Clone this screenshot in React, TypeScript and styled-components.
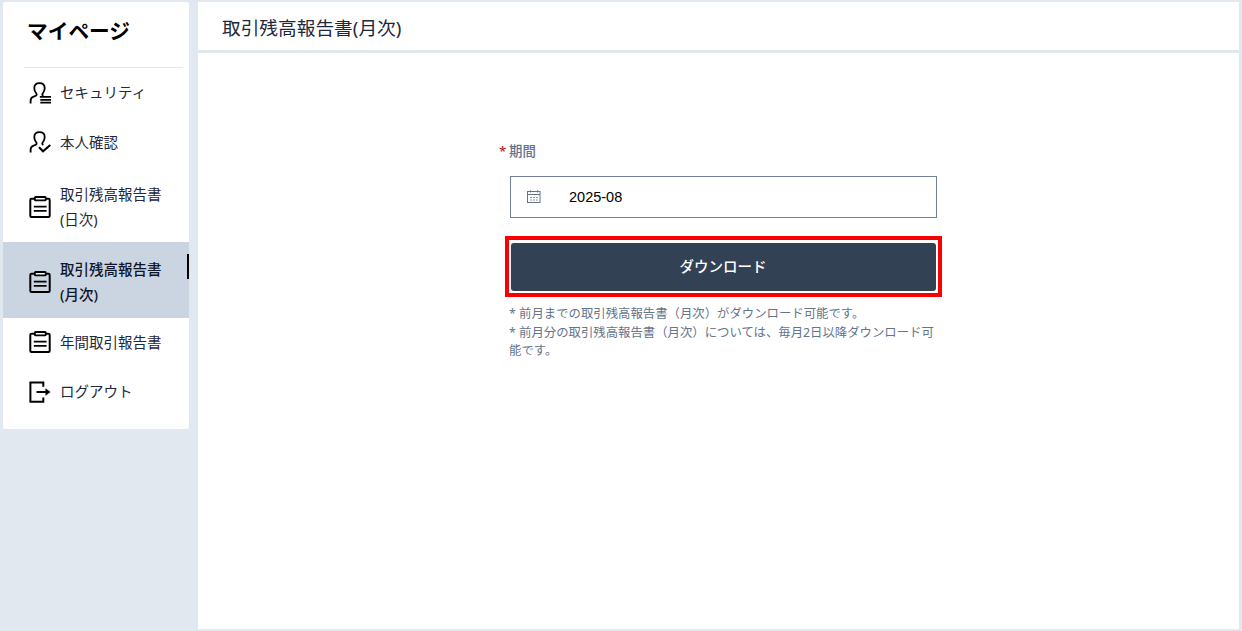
import React from "react";
import styled, { createGlobalStyle, css } from "styled-components";

const GlobalStyle = createGlobalStyle`
  * { box-sizing: border-box; }
  body {
    margin: 0;
    background: #e2e8f0;
    font-family: "Noto Sans", "Noto Sans CJK JP", sans-serif;
    color: #1e293b;
    overflow: hidden;
  }
`;

const Page = styled.div`
  display: flex;
  align-items: flex-start;
  gap: 9px;
  width: 100%;
  height: 631px;
  padding: 2px 3px 2px;
`;

const Sidebar = styled.aside`
  flex: none;
  width: 186px;
  height: 427px;
  background: #fff;
  border-radius: 2px;
`;

const Brand = styled.h1`
  margin: 0 6px 0 21px;
  height: 66px;
  padding: 0 0 10px 3px;
  display: flex;
  align-items: center;
  border-bottom: 1px solid #e5e7eb;
  font-size: 20.7px;
  font-weight: 700;
  color: #000;
  white-space: nowrap;
`;

const Menu = styled.nav`
  display: flex;
  flex-direction: column;
`;

const MenuItem = styled.a<{ $tall?: boolean; $active?: boolean }>`
  display: flex;
  align-items: center;
  gap: 9px;
  height: ${(p) => (p.$tall ? 75.4 : 49.4)}px;
  padding-top: ${(p) => (p.$tall ? 5 : 0)}px;
  padding-left: 26px;
  font-size: 14.5px;
  line-height: 25px;
  white-space: nowrap;
  svg { flex: none; }
  ${(p) =>
    p.$active &&
    css`
      background: #cbd5e1;
      font-weight: 500;
      color: #0f172a;
    `}
`;

const ActiveMark = styled.i`
  align-self: flex-start;
  width: 2px;
  height: 25px;
  margin: 7px 0 0 auto;
  background: #000;
`;

const Main = styled.main`
  flex: 1;
  align-self: stretch;
  display: flex;
  flex-direction: column;
  gap: 3px;
`;

const Header = styled.header`
  display: flex;
  align-items: center;
  height: 47.5px;
  padding: 2px 24px 0;
  background: #fff;
  font-size: 18.7px;
`;

const Content = styled.section`
  flex: 1;
  background: #fff;
  padding: 88px 0 0 307px;
`;

const Form = styled.div`
  width: 437px;
`;

const Label = styled.label`
  display: block;
  margin-left: -6px;
  height: 20px;
  font-size: 13.4px;
  line-height: 20px;
  font-weight: 500;
  color: #64748b;
`;

const Required = styled.span`
  display: inline-block;
  width: 10px;
  color: #b91c1c;
`;

const DateField = styled.div`
  display: flex;
  align-items: center;
  gap: 28px;
  height: 42px;
  margin: 15.5px 5px 18px;
  padding-left: 16px;
  border: 1px solid #718096;
  font: 14.5px "Liberation Sans", Arial, sans-serif;
  color: #000;
`;

const Highlight = styled.div`
  border: 4px solid #fa0000;
  padding: 3px 2px 2px;
  height: 61px;
`;

const DownloadButton = styled.button`
  display: block;
  width: 100%;
  height: 100%;
  padding: 0 1px 3px 0;
  border: 0;
  border-radius: 3px;
  background: #334155;
  color: #fff;
  font: 500 14.5px "Noto Sans", "Noto Sans CJK JP", sans-serif;
`;

const Notes = styled.div`
  margin: 8px 0 0 4px;
  font-size: 12.38px;
  line-height: 18.6px;
  color: #64748b;
  white-space: nowrap;
`;

const Note = styled.p`
  margin: 0;
`;

const Icon = ({ children }: { children: React.ReactNode }) => (
  <svg width="22" height="22" viewBox="0 0 22 22" fill="none" stroke="#000" strokeWidth="1.8">
    {children}
  </svg>
);

const personPath =
  "M1.600 21.500v-2.700c0-2.400 1.100-3.700 3-4.200l1.400-.4c1.700-.5 2.100-1.700 1.200-2.900C5.900 9.700 5.300 8 5.300 6.200 5.300 3.100 7.400 1.200 10.500 1.200s5.200 1.900 5.200 5c0 1.800-.7 3.500-1.900 5-.9 1.200-.7 2.200.6 2.700";

const SecurityIcon = () => (
  <Icon>
    <path d={personPath} />
    <path d="M10.800 14.900H22M11.300 17.800H22M11.300 20.700H22" strokeWidth="1.700" />
  </Icon>
);

const VerifyIcon = () => (
  <Icon>
    <path d={personPath} />
    <path d="M10 16.300l4 4 7.300-6.200" strokeWidth="2" />
  </Icon>
);

const ReportIcon = () => (
  <Icon>
    <rect x="1.300" y="2.700" width="19.400" height="18.300" rx="1.200" strokeWidth="2" />
    <rect x="5.900" y="1" width="10.800" height="3.400" rx="0.600" fill="#fff" />
    <path d="M4.800 10.600H17.600M4.800 14.800H17.600" />
  </Icon>
);

const LogoutIcon = () => (
  <Icon>
    <path d="M14.300 5.800V1.400H1.400V20.800H14.300V16.400" strokeWidth="2" />
    <path d="M7.500 11H18" strokeWidth="2" />
    <path d="M16.500 7.200L21.500 11l-5 3.800z" fill="#000" stroke="none" />
  </Icon>
);

const CalendarIcon = () => (
  <svg width="14" height="14" viewBox="0 0 14 14" fill="none" stroke="#64748b" strokeWidth="1">
    <rect x="0.500" y="1.500" width="12.500" height="11" />
    <path d="M0.500 4.500H13M3.500 0.300V2.500M10.500 0.300V2.500" />
    <path d="M3.300 7.500H11M3.300 10H11" strokeDasharray="1.500 1.400" />
  </svg>
);

export default function App() {
  return (
    <>
      <GlobalStyle />
      <Page>
        <Sidebar>
          <Brand>マイページ</Brand>
          <Menu>
            <MenuItem><SecurityIcon /><span>セキュリティ</span></MenuItem>
            <MenuItem><VerifyIcon /><span>本人確認</span></MenuItem>
            <MenuItem $tall><ReportIcon /><span>取引残高報告書<br />(日次)</span></MenuItem>
            <MenuItem $tall $active>
              <ReportIcon /><span>取引残高報告書<br />(月次)</span><ActiveMark />
            </MenuItem>
            <MenuItem><ReportIcon /><span>年間取引報告書</span></MenuItem>
            <MenuItem><LogoutIcon /><span>ログアウト</span></MenuItem>
          </Menu>
        </Sidebar>
        <Main>
          <Header>取引残高報告書(月次)</Header>
          <Content>
            <Form>
              <Label><Required>*</Required>期間</Label>
              <DateField><CalendarIcon /><span>2025-08</span></DateField>
              <Highlight><DownloadButton>ダウンロード</DownloadButton></Highlight>
              <Notes>
                <Note>* 前月までの取引残高報告書（月次）がダウンロード可能です。</Note>
                <Note>* 前月分の取引残高報告書（月次）については、毎月2日以降ダウンロード可<br />能です。</Note>
              </Notes>
            </Form>
          </Content>
        </Main>
      </Page>
    </>
  );
}
